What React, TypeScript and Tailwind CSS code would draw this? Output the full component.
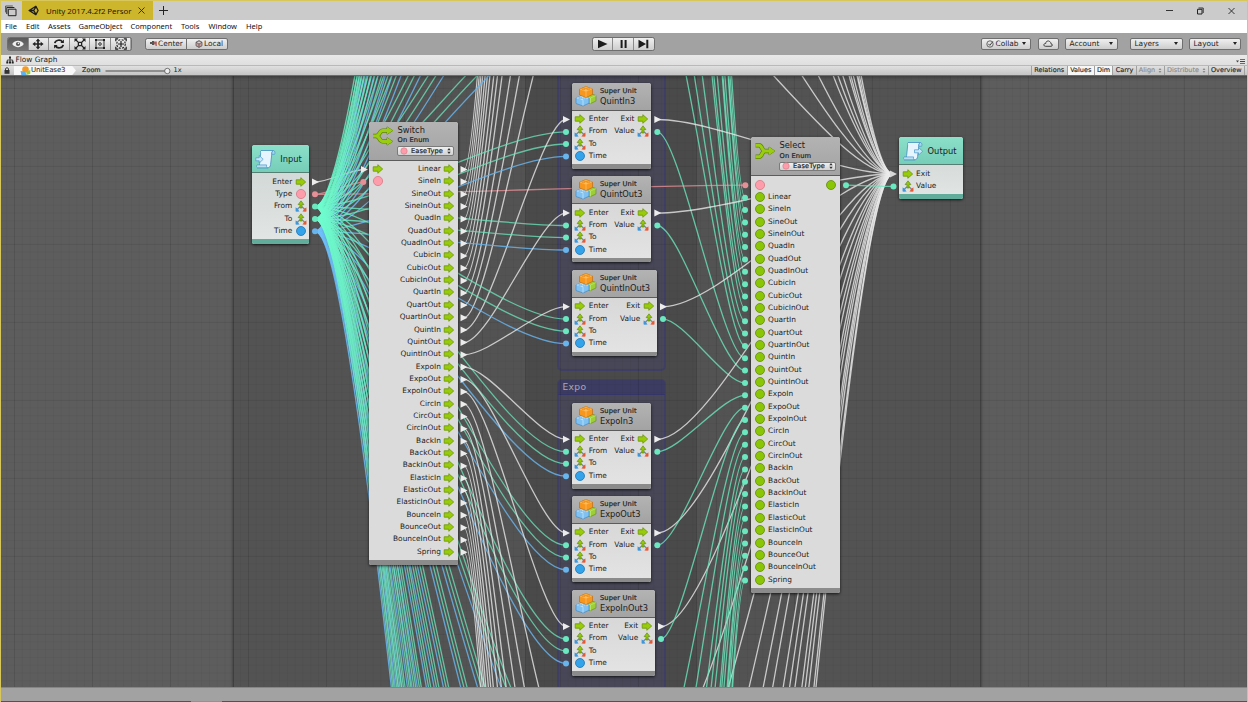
import React from "react";

const P = 12.35;
const FAMILIES = ["Sine", "Quad", "Cubic", "Quart", "Quint", "Expo", "Circ", "Back", "Elastic", "Bounce"];
const EASES: string[] = ["Linear", ...FAMILIES.flatMap((f) => [f + "In", f + "Out", f + "InOut"]), "Spring"];

type Unit = { name: string; row: number; w: number };

const UNITS: Unit[] = EASES.map((name, i) => {
  let row: number;
  if (i === 0) row = -1295;
  else if (i === EASES.length - 1) row = 2039;
  else row = 119 + (Math.floor((i - 1) / 3) - 4) * 319.8 + ((i - 1) % 3) * 93.6;
  const w = name === "ExpoInOut" ? 83 : name.endsWith("InOut") ? 85 : 79.3;
  return { name, row, w };
});

const WHITE = "#ececec";
const TEAL = "#6be8bf";
const BLUE = "#68b4ec";
const PINK = "#e58f96";

function curve(x1: number, y1: number, x2: number, y2: number) {
  const t = (x2 - x1) * 0.25;
  return `M${x1} ${y1}C${x1 + t} ${y1} ${x2 - t} ${y2} ${x2} ${y2}`;
}

function Wire({ d, c, o = 0.78 }: { d: string; c: string; o?: number }) {
  return <path d={d} stroke={c} strokeOpacity={o} strokeWidth={1.3} fill="none" />;
}
function Tri({ x, y, c = WHITE }: { x: number; y: number; c?: string }) {
  return <path d={`M${x - 3} ${y - 3.5}L${x + 4} ${y}L${x - 3} ${y + 3.5}Z`} fill={c} />;
}
function Dot({ x, y, c }: { x: number; y: number; c: string }) {
  return <circle cx={x} cy={y} r={3} fill={c} />;
}

function Wires() {
  return (
    <svg className="absolute left-0 top-0" width="1248" height="702" viewBox="0 0 1248 702">
      <defs>
        <linearGradient id="tealFade" gradientUnits="userSpaceOnUse" x1="315" y1="0" x2="470" y2="0">
          <stop offset="0" stopColor="#6fffd0" stopOpacity="1" />
          <stop offset=".13" stopColor="#6cf5c8" stopOpacity=".85" />
          <stop offset=".3" stopColor="#6be8bf" stopOpacity=".76" />
          <stop offset="1" stopColor="#6be4bb" stopOpacity=".76" />
        </linearGradient>
        <linearGradient id="blueFade" gradientUnits="userSpaceOnUse" x1="315" y1="0" x2="470" y2="0">
          <stop offset="0" stopColor="#6fc3ff" stopOpacity=".6" />
          <stop offset=".13" stopColor="#6cbcf8" stopOpacity=".85" />
          <stop offset="1" stopColor="#68b4ec" stopOpacity=".82" />
        </linearGradient>
      </defs>
      <Wire d={curve(315, 182, 364, 169.5)} c={WHITE} />
      <Wire d={curve(315, 194.3, 364, 182)} c={PINK} />
      <Wire d={curve(315, 194.3, 745, 185.2)} c={PINK} />
      {UNITS.map((u, i) => (
        <g key={u.name}>
          <Wire d={curve(315, 206.6, 566, u.row + 12.9)} c="url(#tealFade)" o={1} />
          <Wire d={curve(315, 219, 566, u.row + 25)} c="url(#tealFade)" o={1} />
          <Wire d={curve(315, 231.3, 566, u.row + 37.4)} c="url(#blueFade)" o={1} />
          <Wire d={curve(464, 169.5 + i * P, 566, u.row + 0.5)} c={WHITE} />
          <Wire d={curve(572 + u.w + 6, u.row + 0.5, 893, 174)} c={WHITE} />
          <Wire d={curve(572 + u.w + 6, u.row + 12.9, 745, 197.7 + i * P)} c={TEAL} />
        </g>
      ))}
      <Wire d={curve(846, 185.2, 893, 186.4)} c={TEAL} />
      <Tri x={315} y={182} />
      <Dot x={315} y={194.3} c={PINK} />
      <Dot x={315} y={206.6} c={TEAL} />
      <Dot x={315} y={219} c={TEAL} />
      <Dot x={315} y={231.3} c={BLUE} />
      <Tri x={364} y={169.5} />
      <Dot x={363.3} y={182} c={PINK} />
      <Dot x={745.3} y={185.2} c={PINK} />
      <Dot x={846} y={185.2} c={TEAL} />
      <Tri x={893} y={174} c="#d8d8d8" />
      <Dot x={893.5} y={186.4} c={TEAL} />
      {UNITS.map((u, i) => (
        <g key={u.name}>
          <Tri x={463.5} y={169.5 + i * P} />
          <Dot x={745} y={197.7 + i * P} c={TEAL} />
          <Tri x={566} y={u.row + 0.5} />
          <Dot x={566} y={u.row + 12.9} c={TEAL} />
          <Dot x={566} y={u.row + 25} c={TEAL} />
          <Dot x={566} y={u.row + 37.4} c={BLUE} />
          <Tri x={572 + u.w + 6} y={u.row + 0.5} />
          <Dot x={572 + u.w + 6} y={u.row + 12.9} c={TEAL} />
        </g>
      ))}
    </svg>
  );
}

type Kind = "flow" | "vec" | "num" | "enum" | "any";

function PortIcon({ kind }: { kind: Kind }) {
  return (
    <svg className="block h-[12px] w-[12px] shrink-0" viewBox="0 0 12 12">
      {kind === "flow" && (
        <path d="M1.2 3.8H5.8V1.7L10.7 6L5.8 10.3V8.2H1.2Z" fill="#98cc0b" stroke="#6b9600" strokeWidth=".8" strokeLinejoin="round" />
      )}
      {kind === "vec" && (
        <g>
          <path d="M5 6.8L2.6 9M7 6.8L9.4 9" stroke="#7a8f9b" strokeWidth="1.4" />
          <path d="M.7 7.2L4.6 11.4H.7Z" fill="#2d8bd8" />
          <path d="M11.3 7.2L7.4 11.4H11.3Z" fill="#e2502f" />
          <path d="M.9 8.6H3.2V11.2H.9Z" fill="#3d97dc" />
          <path d="M8.8 8.6H11.2V11.2H8.8Z" fill="#e55a35" />
          <path d="M5 8V4.6H3.1L6 .8L8.9 4.6H7V8Z" fill="#93c80f" stroke="#587f00" strokeWidth=".6" />
        </g>
      )}
      {kind === "num" && <circle cx="6" cy="6" r="4.5" fill="#35a3ea" stroke="#1d74b8" strokeWidth=".8" />}
      {kind === "enum" && <circle cx="6" cy="6" r="4.6" fill="#fd9dab" stroke="#d97986" strokeWidth=".8" />}
      {kind === "any" && <circle cx="6" cy="6" r="4.5" fill="#8ac506" stroke="#5f8c08" strokeWidth=".8" />}
    </svg>
  );
}

function Row({ inKind, inLabel, outKind, outLabel }: { inKind?: Kind; inLabel?: string; outKind?: Kind; outLabel?: string }) {
  return (
    <div className="flex h-[12.35px] shrink-0 items-center gap-[2.5px]">
      {inKind && <PortIcon kind={inKind} />}
      {inLabel && <span className="text-[7.4px] leading-[10px]">{inLabel}</span>}
      <span className="grow" />
      {outLabel && <span className="text-[7.4px] leading-[10px]">{outLabel}</span>}
      {outKind && <PortIcon kind={outKind} />}
    </div>
  );
}

const nodeBox = "absolute flex flex-col overflow-hidden rounded-[2.5px] shadow-[0_1px_3px_rgba(0,0,0,0.75)] text-[#1c1c1c] whitespace-nowrap";
const grayHead = "flex shrink-0 border-b border-[#5c5c5c] bg-linear-to-b from-[#b3b3b3] to-[#a3a3a3]";
const tealHead = "flex h-[28.3px] shrink-0 items-center border-b border-[#567f74] bg-linear-to-b from-[#8be0c9] to-[#76cdb8] gap-[3.3px] px-[3px]";
const subTitle = "text-[6.7px] leading-[9px] tracking-[0.13px] text-[#222222] [-webkit-text-stroke:0.2px_#222222]";

function Bricks() {
  return (
    <svg className="block h-[22px] w-[22px] shrink-0" viewBox="0 0 22 22">
      <path d="M11.5 11.5L17 9L21 10.5V16L15 18.8L11 17Z" fill="#9bcf35" stroke="#5f8d16" strokeWidth=".6" />
      <path d="M11.5 11.5L15.5 13L21 10.5M15.5 13V18.6" stroke="#c9ec83" strokeWidth=".6" fill="none" />
      <path d="M1 13L7 10.5L14 13V18.2L8 21L1 18.5Z" fill="#7fc1f1" stroke="#3c80bd" strokeWidth=".6" />
      <path d="M1 13L8 15.6L14 13L7 10.5Z" fill="#b9e1fb" />
      <path d="M8 15.6V20.8" stroke="#d9f0ff" strokeWidth=".6" />
      <path d="M4.5 4.2L11 1.8L17.5 4V9.5L11 12.6L4.5 10Z" fill="#f8971d" stroke="#bd6509" strokeWidth=".6" />
      <path d="M4.5 4.2L11 6.8L17.5 4L11 1.8Z" fill="#ffbe5c" />
      <path d="M11 6.8V12.3" stroke="#ffc77a" strokeWidth=".6" />
      <ellipse cx="8.5" cy="3.8" rx="1.9" ry="1.1" fill="#ffa52f" stroke="#cf7410" strokeWidth=".4" />
      <ellipse cx="13.3" cy="3.8" rx="1.9" ry="1.1" fill="#ffa52f" stroke="#cf7410" strokeWidth=".4" />
      <ellipse cx="11" cy="2.4" rx="1.9" ry="1" fill="#ffb343" stroke="#cf7410" strokeWidth=".4" />
      <ellipse cx="5.2" cy="13" rx="1.7" ry=".9" fill="#a2d6f9" stroke="#5397cc" strokeWidth=".4" />
      <ellipse cx="9.4" cy="13.6" rx="1.7" ry=".9" fill="#a2d6f9" stroke="#5397cc" strokeWidth=".4" />
    </svg>
  );
}

function SuperUnit({ u }: { u: Unit }) {
  return (
    <div className={nodeBox + " h-[86px] bg-linear-to-b from-[#d2d2d2] to-[#e4e4e4]"} style={{ left: 572, top: u.row - 36.2, width: u.w }}>
      <div className={grayHead + " h-[28px] items-start pl-[2.5px] pt-[2px] gap-[3.5px]"}>
        <Bricks />
        <div className="flex flex-col pt-[2px]">
          <span className={subTitle}>Super Unit</span>
          <span className="text-[8.3px] leading-[11px] tracking-[-0.05px]">{u.name}3</span>
        </div>
      </div>
      <div className="flex grow flex-col px-[2.3px] pt-[2px]">
        <Row inKind="flow" inLabel="Enter" outKind="flow" outLabel="Exit" />
        <Row inKind="vec" inLabel="From" outKind="vec" outLabel="Value" />
        <Row inKind="vec" inLabel="To" />
        <Row inKind="num" inLabel="Time" />
      </div>
      <div className="h-[4.5px] shrink-0 bg-[#8b8b8b]" />
    </div>
  );
}

function EnumPopup() {
  return (
    <span className="mt-[1px] flex h-[9.5px] w-[57px] items-center rounded-[2px] border border-[#7b7b7b] bg-linear-to-b from-[#f0f0f0] to-[#d2d2d2] pl-[1.5px]">
      <svg className="h-[8px] w-[8px] shrink-0" viewBox="0 0 8 8"><circle cx="4" cy="4" r="3.2" fill="#fd9dab" stroke="#d97986" strokeWidth=".6" /></svg>
      <span className="ml-[3px] text-[6.6px] leading-[8px] tracking-[0.15px] text-[#222222] [-webkit-text-stroke:0.2px_#222222]">EaseType</span>
      <svg className="ml-auto mr-[2px] h-[6px] w-[4px]" viewBox="0 0 4 6"><path d="M2 0L3.7 2.3H.3ZM2 6L3.7 3.7H.3Z" fill="#333333" /></svg>
    </span>
  );
}

function BranchIcon({ merge }: { merge?: boolean }) {
  const d = merge
    ? "M1.5 4.2H5C8.5 4.2 7.5 10 11 10H16M1.5 15.8H5C8.5 15.8 7.5 10 11 10"
    : "M1 10H5M16 4.6H11C7 4.6 8 10 4 10C8 10 7 15.4 11 15.4H16";
  const heads = merge ? "M15 6L20.8 10L15 14Z" : "M15 .9L20.8 4.6L15 8.3ZM15 11.7L20.8 15.4L15 19.1Z";
  return (
    <svg className="block h-[20px] w-[22px] shrink-0" viewBox="0 0 22 20">
      <path d={heads} fill="#9acd12" stroke="#5e8600" strokeWidth=".9" />
      <path d={d} stroke="#5e8600" strokeWidth="4.4" fill="none" />
      <path d={d} stroke="#9acd12" strokeWidth="3" fill="none" />
      <path d={heads} fill="#9acd12" />
    </svg>
  );
}

function BranchHead({ title, merge }: { title: string; merge?: boolean }) {
  return (
    <div className={grayHead + " h-[39.2px] items-start gap-[3.2px] pl-[3px] pt-[3px]"}>
      <div className="pt-[1px]"><BranchIcon merge={merge} /></div>
      <div className="flex flex-col">
        <span className="text-[8.3px] leading-[11px]">{title}</span>
        <span className={subTitle + " pt-[0.5px]"}>On Enum</span>
        <EnumPopup />
      </div>
    </div>
  );
}

function Scroll({ out }: { out?: boolean }) {
  return (
    <svg className="block h-[22px] w-[22px] shrink-0" viewBox="0 0 22 22">
      <path d="M6 2.5H18.5C16.5 3.5 16.8 5.5 16.6 8L15.6 16.5C15.4 18.8 14.5 19.8 12.5 19.8H2.5C4 19 4.4 17.5 4.6 15.5L5.6 6C5.8 4 5 3 6 2.5Z" fill="#e6f4fd" stroke="#4d97c6" strokeWidth=".9" />
      <path d="M18.5 2.5C20.3 3 20.2 5.2 19.6 6.3H16.8C16.8 4.5 17 3 18.5 2.5Z" fill="#a9d7f2" stroke="#4d97c6" strokeWidth=".7" />
      <path d="M2.5 19.8C1.2 19.3 1.3 17.6 2 16.9H11.6C11.3 18.5 11.5 19.5 12.5 19.8Z" fill="#b8def4" stroke="#4d97c6" strokeWidth=".7" />
      {out ? (
        <path d="M12.5 9.8H16.5V7.5L20.7 11.3L16.5 15V12.8H12.5Z" fill="#c6e8fb" stroke="#4d97c6" strokeWidth=".7" />
      ) : (
        <path d="M.8 9.8H4.2V7.5L8.2 11.3L4.2 15V12.8H.8Z" fill="#c6e8fb" stroke="#4d97c6" strokeWidth=".7" />
      )}
    </svg>
  );
}

function Graph() {
  return (
    <div className="relative h-[611px] shrink-0 overflow-hidden bg-[#5d5d5d]">
      <div className="absolute -left-[1px] -top-[76px] h-[702px] w-[1248px]">
        <div className="absolute left-[233px] top-0 h-[702px] w-[748px] border-x border-[#404040] bg-[#535353] shadow-[0_0_3px_#3a3a3a]" />
        <div className="absolute left-[525px] top-0 h-[702px] w-[172px] border-x border-[#434343] bg-[#4a4a4a]" />
        <div className="absolute left-[556.5px] top-[60px] h-[311px] w-[109px] rounded-[5px] border-2 border-[#3f3f66] bg-[#474757]" />
        <div className="absolute left-[556.5px] top-[379px] h-[330px] w-[109px] rounded-[5px] border-2 border-[#3f3f66] bg-[#474757]">
          <div className="-mx-[1px] -mt-[1px] h-[14.5px] rounded-t-[4px] border-b border-[#35356a] bg-[#3c3c62] pl-[5px] text-[9.2px] leading-[14px] tracking-[0.3px] text-[#a9a9bf]">Expo</div>
        </div>
        <div className="absolute inset-0 bg-[linear-gradient(to_right,rgba(0,0,0,0.035)_1px,transparent_1px),linear-gradient(to_bottom,rgba(0,0,0,0.035)_1px,transparent_1px)] bg-[size:7.8px_7.8px] bg-[position:6.2px_2px]" />
        <div className="absolute inset-0 bg-[linear-gradient(to_right,rgba(0,0,0,0.08)_1px,transparent_1px),linear-gradient(to_bottom,rgba(0,0,0,0.05)_1px,transparent_1px)] bg-[size:78px_78px] bg-[position:14px_10px]" />
        <Wires />

        <div className={nodeBox + " left-[252px] top-[145px] h-[98.5px] w-[57px] bg-linear-to-b from-[#cdd4d2] to-[#e2e6e5]"}>
          <div className={tealHead}>
            <Scroll />
            <span className="pt-[1.5px] text-[8.3px] leading-[11px]">Input</span>
          </div>
          <div className="flex grow flex-col px-[2.3px] pt-[2.2px]">
            <Row outKind="flow" outLabel="Enter" />
            <Row outKind="enum" outLabel="Type" />
            <Row outKind="vec" outLabel="From" />
            <Row outKind="vec" outLabel="To" />
            <Row outKind="num" outLabel="Time" />
          </div>
          <div className="h-[4.5px] shrink-0 bg-[#61ac9a]" />
        </div>

        <div className={nodeBox + " left-[369.3px] top-[121.7px] h-[443px] w-[88.4px] bg-[#dbdbdb]"}>
          <BranchHead title="Switch" />
          <div className="flex grow flex-col px-[2.3px] pt-[2px]">
            {EASES.map((e, i) => (
              <Row key={e} inKind={i === 0 ? "flow" : i === 1 ? "enum" : undefined} outKind="flow" outLabel={e} />
            ))}
          </div>
          <div className="h-[4.5px] shrink-0 bg-[#8b8b8b]" />
        </div>

        {UNITS.filter((u) => u.row > 100 && u.row < 700).map((u) => (
          <SuperUnit key={u.name} u={u} />
        ))}

        <div className={nodeBox + " left-[751.3px] top-[137.2px] h-[455.5px] w-[88.4px] bg-[#dbdbdb]"}>
          <BranchHead title="Select" merge />
          <div className="flex grow flex-col px-[2.3px] pt-[2px]">
            <Row inKind="enum" outKind="any" />
            {EASES.map((e) => (
              <Row key={e} inKind="any" inLabel={e} />
            ))}
          </div>
          <div className="h-[4.5px] shrink-0 bg-[#8b8b8b]" />
        </div>

        <div className={nodeBox + " left-[899.3px] top-[137px] h-[61.8px] w-[63.5px] bg-linear-to-b from-[#cdd4d2] to-[#e2e6e5]"}>
          <div className={tealHead}>
            <Scroll out />
            <span className="pt-[1.5px] text-[8.3px] leading-[11px]">Output</span>
          </div>
          <div className="flex grow flex-col px-[2.3px] pt-[2.2px]">
            <Row inKind="flow" inLabel="Exit" />
            <Row inKind="vec" inLabel="Value" />
          </div>
          <div className="h-[4.5px] shrink-0 bg-[#61ac9a]" />
        </div>
      </div>
      <div className="absolute inset-x-0 top-0 h-[4px] bg-linear-to-b from-black/25 to-transparent" />
    </div>
  );
}

const btn = "flex h-[12px] items-center border border-[#6f6f6f] bg-linear-to-b from-[#f0f0f0] to-[#cdcdcd]";

function ToolIcon({ n }: { n: number }) {
  return (
    <svg className="h-[12px] w-[12px]" viewBox="0 0 12 12" fill="none" stroke="#222222" strokeWidth="1.3">
      {n === 0 && (
        <g stroke="none">
          <path d="M.2 6C3 1.8 9 1.8 11.8 6C9 10.2 3 10.2 .2 6Z" fill="#eeeeee" />
          <circle cx="6" cy="6" r="2.1" fill="#555555" />
          <circle cx="6.4" cy="5.4" r=".8" fill="#eeeeee" />
        </g>
      )}
      {n === 1 && (
        <g>
          <path d="M6 2V10M2 6H10" strokeWidth="1.7" />
          <path d="M6 .4L8.3 3.3H3.7ZM6 11.6L8.3 8.7H3.7ZM.4 6L3.3 3.7V8.3ZM11.6 6L8.7 3.7V8.3Z" fill="#222222" stroke="none" />
        </g>
      )}
      {n === 2 && (
        <g>
          <path d="M1.8 5.2C2.4 2 7.5 1 9.5 4M10.2 6.8C9.6 10 4.5 11 2.5 8" strokeWidth="1.7" />
          <path d="M10.9 1.5V5H7.4ZM1.1 10.5V7H4.6Z" fill="#222222" stroke="none" />
        </g>
      )}
      {n === 3 && (
        <g>
          <path d="M4.4 4.4H7.6V7.6H4.4Z" />
          <path d="M4 4L1.6 1.6M8 4L10.4 1.6M4 8L1.6 10.4M8 8L10.4 10.4" />
          <path d="M.5 .5H4L.5 4ZM11.5 .5V4L8 .5ZM.5 11.5V8L4 11.5ZM11.5 11.5H8L11.5 8Z" fill="#222222" stroke="none" />
        </g>
      )}
      {n === 4 && (
        <g>
          <path d="M2 2H10V10H2Z" strokeWidth=".9" />
          <circle cx="6" cy="6" r="1.3" strokeWidth=".9" />
          <path d="M1 1H3V3H1ZM9 1H11V3H9ZM1 9H3V11H1ZM9 9H11V11H9Z" fill="#222222" stroke="none" />
        </g>
      )}
      {n === 5 && (
        <g>
          <path d="M6 3V9M3 6H9M.8 3.2V.8H3.2M8.8 .8H11.2V3.2M.8 8.8V11.2H3.2M8.8 11.2H11.2V8.8" strokeWidth="1.2" />
          <circle cx="6" cy="6" r="4.3" strokeDasharray="2 1.4" strokeWidth="1.1" />
        </g>
      )}
    </svg>
  );
}

function Drop({ label, w }: { label: string; w: string }) {
  return (
    <div className={`${btn} ${w} justify-between rounded-[2px] px-[3.5px]`}>
      <span>{label}</span>
      <svg className="h-[3px] w-[4px]" viewBox="0 0 4 3"><path d="M0 0H4L2 3Z" fill="#222222" /></svg>
    </div>
  );
}

const seg = "flex h-full items-center justify-center border-l border-[#a0a0a0] text-[6.5px] [-webkit-text-stroke:0.12px_currentColor]";

function SortMark() {
  return (
    <svg className="ml-[3px] h-[5px] w-[4px]" viewBox="0 0 4 6"><path d="M2 0L3.7 2.3H.3ZM2 6L3.7 3.7H.3Z" fill="#8a8a8a" /></svg>
  );
}

export default function App() {
  return (
    <div className="flex h-[702px] w-[1248px] flex-col overflow-hidden border-x border-t border-[#d8c75a] bg-[#a2a2a2] font-['DejaVu_Sans',sans-serif] whitespace-nowrap">
      <div className="flex h-[19px] shrink-0 items-center bg-[#cbcbcb] font-['Noto_Sans',sans-serif]">
        <svg className="ml-[4px] h-[12px] w-[12px]" viewBox="0 0 12 12" fill="none" stroke="#222222">
          <path d="M3.3 4.2H11V10.7H3.3ZM1.8 9V2.5H9.4" />
          <path d="M.6 7.4V1H7.8" strokeWidth=".7" />
        </svg>
        <div className="ml-[5px] flex h-[19px] w-[130.5px] items-center bg-[#cdb62c]">
          <svg className="ml-[6px] h-[11px] w-[11px] shrink-0" viewBox="0 0 12 12" fill="none" stroke="#1b1b1b" strokeWidth="1.4">
            <path d="M1.2 6L8.6 1.4L11 6L8.6 10.6ZM1.2 6H6.2L8.8 1.8M6.2 6L8.8 10.2" strokeLinejoin="round" />
          </svg>
          <span className="ml-[7px] w-[88px] shrink-0 text-[7.9px] leading-[12px] tracking-[-0.05px] text-[#1d1a05]">Unity 2017.4.2f2 Persor</span>
          <svg className="ml-[4px] h-[7px] w-[7px] shrink-0" viewBox="0 0 7 7"><path d="M.5 .5L6.5 6.5M6.5 .5L.5 6.5" stroke="#2d280a" strokeWidth=".9" /></svg>
        </div>
        <svg className="ml-[6px] h-[9px] w-[9px]" viewBox="0 0 9 9"><path d="M4.5 0V9M0 4.5H9" stroke="#222222" /></svg>
        <div className="grow" />
        <svg className="mr-[9px] h-[8px] w-[72px]" viewBox="0 0 72 8" fill="none" stroke="#222222">
          <path d="M0 3.5H7" strokeWidth=".9" />
          <path d="M31.5 2.3H36V7H31.5Z" />
          <path d="M32.5 1H37.2V6" strokeWidth=".9" />
          <path d="M62.5 1L68.5 7M68.5 1L62.5 7" strokeWidth=".9" />
        </svg>
      </div>

      <div className="flex h-[13px] shrink-0 items-center bg-white pl-[4px] font-['Noto_Sans',sans-serif] text-[7.5px] leading-[11px] text-[#111111]">
        <span className="w-[21px]">File</span>
        <span className="w-[22px]">Edit</span>
        <span className="w-[30.5px]">Assets</span>
        <span className="w-[52px]">GameObject</span>
        <span className="w-[50.5px]">Component</span>
        <span className="w-[27.5px]">Tools</span>
        <span className="w-[37.5px]">Window</span>
        <span>Help</span>
      </div>

      <div className="flex h-[22px] shrink-0 items-center bg-[#a2a2a2] pb-[1px] text-[7.4px] leading-[10px] text-[#1e1e1e]">
        <div className="ml-[6px] flex h-[14px] w-[124.5px] overflow-hidden rounded-[2.5px] border border-[#6f6f6f]">
          {[0, 1, 2, 3, 4, 5].map((n) => (
            <div
              key={n}
              className={
                n === 0
                  ? "flex flex-1 items-center justify-center bg-linear-to-b from-[#5a5a5a] to-[#747474]"
                  : "flex flex-1 items-center justify-center border-l border-[#8a8a8a] bg-linear-to-b from-[#f0f0f0] to-[#cdcdcd]"
              }
            >
              <ToolIcon n={n} />
            </div>
          ))}
        </div>
        <div className={btn + " ml-[13.5px] w-[42px] gap-[1.5px] rounded-l-[2.5px] pl-[3.5px]"}>
          <svg className="h-[7px] w-[7px]" viewBox="0 0 7 7"><path d="M0 2H2V1H4V5H2V4H0Z" fill="#555555" /><path d="M4 1.5H6.8V6H5.5V4.5H4Z" fill="#a86060" /></svg>
          Center
        </div>
        <div className={btn + " w-[41px] gap-[1.5px] rounded-r-[2.5px] border-l-0 pl-[7.5px]"}>
          <svg className="h-[8px] w-[8px]" viewBox="0 0 8 8"><path d="M4 .6L7 2.2V5.8L4 7.4L1 5.8V2.2ZM1 2.2L4 4L7 2.2M4 4V7.4" fill="#cc9999" stroke="#555555" strokeWidth=".8" /></svg>
          Local
        </div>
        <div className="ml-[363.5px] flex h-[14px] w-[63px] overflow-hidden rounded-[2.5px] border border-[#6f6f6f] bg-linear-to-b from-[#f0f0f0] to-[#cdcdcd]">
          {["M1 .8L10.5 5L1 9.2Z", "M2.6 1H4.6V9H2.6ZM6.6 1H8.6V9H6.6Z", "M.5 .8L8 5L.5 9.2ZM8.3 .8H10.3V9.2H8.3Z"].map((d, i) => (
            <div key={d} className={i ? "flex flex-1 items-center justify-center border-l border-[#8a8a8a]" : "flex flex-1 items-center justify-center"}>
              <svg className="h-[10px] w-[11px]" viewBox="0 0 11 10"><path d={d} fill="#1c1c1c" /></svg>
            </div>
          ))}
        </div>
        <div className="grow" />
        <div className={btn + " w-[50.5px] gap-[2px] rounded-[2px] px-[4px]"}>
          <svg className="h-[8px] w-[8px] shrink-0" viewBox="0 0 8 8" fill="none" stroke="#666666"><circle cx="4" cy="4" r="3.2" /><path d="M2.3 3.8L3.8 5.3L6.8 1.6" stroke="#444444" /></svg>
          Collab
          <svg className="ml-auto h-[3px] w-[4px] shrink-0" viewBox="0 0 4 3"><path d="M0 0H4L2 3Z" fill="#222222" /></svg>
        </div>
        <div className={btn + " ml-[6.5px] w-[21px] justify-center rounded-[2px]"}>
          <svg className="h-[7px] w-[10px]" viewBox="0 0 10 7"><path d="M2.5 6.3H8C9.8 6.3 9.8 3.8 8 3.8C8 2 5.8 .2 4 1.2C3 1.8 2.8 2.6 2.8 3.4C.2 3.4 .2 6.3 2.5 6.3Z" fill="none" stroke="#333333" strokeWidth=".9" /></svg>
        </div>
        <div className="w-[6.5px]" />
        <Drop label="Account" w="w-[52.5px]" />
        <div className="w-[12.5px]" />
        <Drop label="Layers" w="w-[52.5px]" />
        <div className="w-[6.5px]" />
        <Drop label="Layout" w="w-[52px]" />
        <div className="w-[6px]" />
      </div>

      <div className="flex h-[10px] shrink-0 items-center bg-linear-to-b from-[#e9e9e9] to-[#dfdfdf] pl-[5px] text-[7.4px] leading-[10px] text-[#222222]">
        <svg className="h-[8px] w-[8px]" viewBox="0 0 8 8"><path d="M3 .5H5V2.5H3ZM.3 5.5H2.3V7.5H.3ZM3 5.5H5V7.5H3ZM5.7 5.5H7.7V7.5H5.7Z" fill="#222222" /><path d="M4 2V6M1.3 6V4H6.7V6" stroke="#222222" strokeWidth=".8" fill="none" /></svg>
        <span className="ml-[1.5px]">Flow Graph</span>
        <div className="grow" />
        <svg className="mr-[2.5px] mt-[3px] h-[5px] w-[9px]" viewBox="0 0 9 5"><path d="M0 1.5H3L1.5 3.5ZM4 .3H9V1.1H4ZM4 2.1H9V2.9H4ZM4 3.9H9V4.7H4Z" fill="#444444" /></svg>
      </div>

      <div className="flex h-[11px] shrink-0 items-center border-b border-t border-b-[#6c6c6c] border-t-[#b9b9b9] bg-linear-to-b from-[#e0e0e0] to-[#c4c4c4] text-[6.6px] leading-[9px] text-[#222222]">
        <svg className="ml-[3px] h-[7px] w-[6px]" viewBox="0 0 6 7"><path d="M.5 3H5.5V6.8H.5Z" fill="#333333" /><path d="M1.5 3V2C1.5 .3 4.5 .3 4.5 2V3" fill="none" stroke="#333333" strokeWidth=".9" /></svg>
        <div className="ml-[4px] flex h-full w-[62px] items-center bg-[#f8f8f8] pl-[6px] text-[7px] [clip-path:polygon(0_0,94%_0,100%_50%,94%_100%,0_100%)]">
          <svg className="h-[10px] w-[11px] shrink-0" viewBox="0 0 11 10"><circle cx="5.5" cy="3.5" r="3.3" fill="#f59a25" /><path d="M6.5 5.5L10.3 4V7.8L6.5 9Z" fill="#9bcf35" /><path d="M.5 5L5 5.5L7 9.8H1.5Z" fill="#5fb0ee" /></svg>
          <span className="tracking-[-0.1px]">UnitEase3</span>
        </div>
        <span className="ml-[6px] w-[22.5px] text-[6.4px] tracking-[0.05px] text-[#2c2c2c] [-webkit-text-stroke:0.2px_#2c2c2c]">Zoom</span>
        <svg className="h-[8px] w-[66px]" viewBox="0 0 66 8"><path d="M.5 4H60" stroke="#777777" strokeWidth="1.6" /><circle cx="62.3" cy="4" r="2.7" fill="#eeeeee" stroke="#555555" strokeWidth=".8" /></svg>
        <span className="ml-[3px]">1x</span>
        <div className="grow" />
        <span className={seg + " w-[35.5px]"}>Relations</span>
        <span className={seg + " w-[27.5px] bg-[#f6f6f6]"}>Values</span>
        <span className={seg + " w-[18px] bg-[#f6f6f6]"}>Dim</span>
        <span className={seg + " w-[24px]"}>Carry</span>
        <span className={seg + " w-[28px] text-[#8a8a8a]"}>Align<SortMark /></span>
        <span className={seg + " w-[44px] text-[#8a8a8a]"}>Distribute<SortMark /></span>
        <span className={seg + " mr-[2.5px] w-[36.5px] border-r"}>Overview</span>
      </div>

      <Graph />

      <div className="h-[14px] shrink-0 border-t border-[#858585] bg-[#a2a2a2]" />
      <div className="flex h-[1px] shrink-0 bg-[#5f561a]">
        <div className="ml-[190px] h-[1px] w-[31px] bg-[#a8983a]" />
      </div>
    </div>
  );
}
